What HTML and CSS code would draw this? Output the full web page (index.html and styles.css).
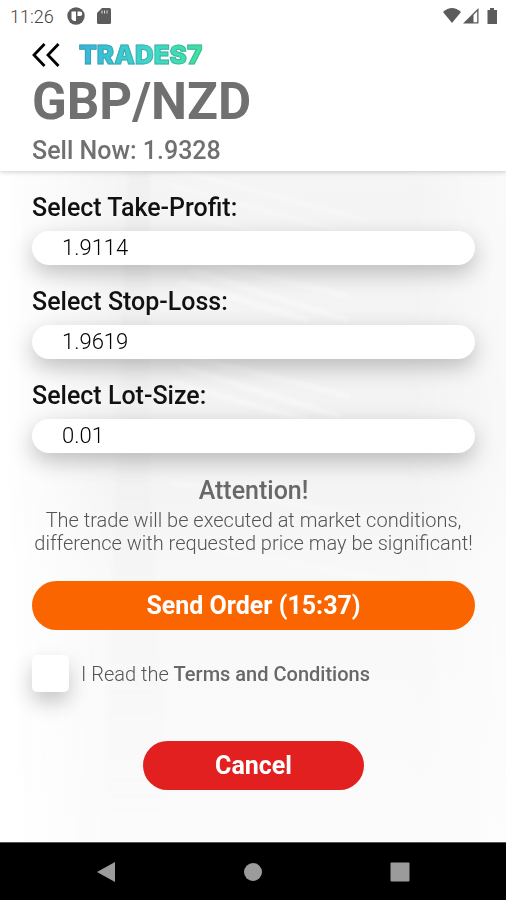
FILE: index.html
```html
<!DOCTYPE html>
<html lang="en">
<head>
<meta charset="utf-8">
<meta name="viewport" content="width=device-width, initial-scale=1">
<title>Sell GBP/NZD</title>
<link rel="stylesheet" href="styles.css">
</head>
<body>
<div class="status">
  <span>11:26</span>
  <svg class="status-app" width="18" height="18" viewBox="0 0 18 18" aria-hidden="true">
    <circle cx="9" cy="9" r="8.7" fill="#5c5c5c"/>
    <path d="M4.500 4.500h4.500v9.500H7a7 7 0 0 1-2.500-2zM10.500 4.500h2.500a2.200 2.200 0 0 1 0 4.500h-2.500z" fill="#fff"/>
  </svg>
  <svg width="14" height="16" viewBox="0 0 14 16" aria-hidden="true">
    <path d="M5 0h7.500Q14 0 14 1.500v13q0 1.500-1.500 1.500h-11Q0 16 0 14.500V5z" fill="#5c5c5c"/>
    <path d="M5 2.500v3M7.500 2.500v3M10 2.500v3" stroke="#ddd" stroke-width="1"/>
  </svg>
  <svg class="status-right" width="55" height="16" viewBox="0 0 55 16" aria-hidden="true">
    <path d="M0 4Q9-4 18 4L9 15z" fill="#5c5c5c"/>
    <path d="M20 15.500L35.500 0v15.500z" fill="#5c5c5c"/>
    <path d="M30.500 7L34.200 3.300v10.900h-3.700z" fill="#fff"/>
    <path d="M47 0h4v2h3v14H44.500V2H47z" fill="#5c5c5c"/>
  </svg>
</div>

<header class="header">
  <div class="brand">
    <button class="back" type="button" aria-label="Back">
      <svg width="28" height="26" viewBox="0 0 28 26" aria-hidden="true">
        <path d="M12.500 2L2 13l10.500 11M26.500 2L16 13l10.500 11" fill="none" stroke="#000" stroke-width="2.800"/>
      </svg>
    </button>
    <span class="logo">TRADES7</span>
  </div>
  <h1 class="pair">GBP/NZD</h1>
  <p class="price">Sell Now: 1.9328</p>
</header>

<main class="main">
  <svg class="backdrop" viewBox="0 0 506 670" preserveAspectRatio="none" aria-hidden="true">
    <defs>
      <linearGradient id="fade" x1="0" y1="0" x2="0" y2="1">
        <stop offset="0" stop-color="#f5f5f5"/>
        <stop offset=".4" stop-color="#f2f2f2"/>
        <stop offset=".6" stop-color="#f8f8f8"/>
        <stop offset="1" stop-color="#fbfbfb"/>
      </linearGradient>
      <linearGradient id="side" x1="0" y1="0" x2="1" y2="0">
        <stop offset="0" stop-color="#fff"/>
        <stop offset=".25" stop-color="#fff" stop-opacity="0"/>
        <stop offset=".8" stop-color="#fff" stop-opacity="0"/>
        <stop offset="1" stop-color="#fff" stop-opacity=".5"/>
      </linearGradient>
      <linearGradient id="column" x1="0" y1="0" x2="0" y2="1">
        <stop offset="0" stop-color="#e8e8e8"/>
        <stop offset="1" stop-color="#e8e8e8" stop-opacity="0"/>
      </linearGradient>
      <filter id="soft"><feGaussianBlur stdDeviation="2"/></filter>
    </defs>
    <rect width="506" height="670" fill="url(#fade)"/>
    <path d="M128 0L100 670H170L150 300V0z" fill="url(#column)" opacity=".35" filter="url(#soft)"/>
    <g stroke="#fff" opacity=".45" fill="none" filter="url(#soft)">
      <path d="M180 0L370 50M170 14L340 60M160 34L310 76" stroke-width="3"/>
      <path d="M200 90L350 125M190 98L350 150M180 110L310 150" stroke-width="5"/>
      <path d="M190 185L350 225M180 195L340 245M170 210L310 250" stroke-width="5"/>
      <path d="M170 310L390 350M170 370L400 410" stroke-width="6" opacity=".6"/>
    </g>
    <rect width="506" height="670" fill="url(#side)"/>
  </svg>

  <form class="form">
    <label class="label" for="tp">Select Take-Profit:</label>
    <input class="field" id="tp" type="text" value="1.9114">
    <label class="label" for="sl">Select Stop-Loss:</label>
    <input class="field" id="sl" type="text" value="1.9619">
    <label class="label" for="lot">Select Lot-Size:</label>
    <input class="field" id="lot" type="text" value="0.01">

    <h2 class="attention">Attention!</h2>
    <p class="note">The trade will be executed at market conditions,<br>difference with requested price may be significant!</p>

    <button class="btn send" type="button">Send Order (15:37)</button>
    <div class="terms">
      <input class="check" id="agree" type="checkbox">
      <label for="agree">I Read the <b>Terms and Conditions</b></label>
    </div>
    <button class="btn cancel" type="button">Cancel</button>
  </form>
</main>

<nav class="nav" aria-label="System">
  <button type="button" aria-label="Back"><svg width="20" height="22" viewBox="0 0 20 22"><path d="M1 11L19 1v20z" fill="#9b9b9b"/></svg></button>
  <button type="button" aria-label="Home"><svg width="20" height="22" viewBox="0 0 20 22"><circle cx="10" cy="11" r="9" fill="#9b9b9b"/></svg></button>
  <button type="button" aria-label="Recent apps"><svg width="20" height="22" viewBox="0 0 20 22"><rect x=".5" y="1.500" width="19" height="19" rx="1" fill="#9b9b9b"/></svg></button>
</nav>
</body>
</html>
```
FILE: styles.css
```css
* { box-sizing: border-box; }

body {
  margin: 0;
  min-height: 100vh;
  display: flex;
  flex-direction: column;
  background: #fff;
  color: #707070;
  font-family: Roboto, "Liberation Sans", sans-serif;
}

h1, h2, p { margin: 0; font-weight: 500; }
button { border: 0; padding: 0; background: none; font-family: inherit; }
svg { display: block; }

.status {
  position: relative;
  z-index: 2;
  display: flex;
  align-items: center;
  height: 32px;
  padding: 0 8px 0 10px;
  background: #fff;
  font-size: 18px;
  font-weight: 300;
  color: #444;
}
.status-app { margin: 0 12px 0 13px; }
.status-right { margin-left: auto; }

.header {
  position: relative;
  z-index: 1;
  height: 139px;
  padding: 8px 32px 0;
  background: #fff;
  box-shadow: 0 1px 5px rgba(0, 0, 0, .2);
}
.brand { display: flex; align-items: center; gap: 19px; height: 30px; }
.logo {
  font: 900 26px/30px Inter, sans-serif;
  color: transparent;
  background: linear-gradient(90deg, #39b4dc, #40d8c8 60%, #3de29c);
  -webkit-background-clip: text;
  background-clip: text;
  -webkit-text-stroke: 1px rgba(50, 130, 130, .45);
}
.pair { font-size: 51px; line-height: 64px; font-weight: 700; }
.price { font-size: 25px; line-height: 34px; }

.main { position: relative; flex: 1; }
.backdrop { position: absolute; inset: 0; width: 100%; height: 100%; }

.form {
  position: relative;
  display: flex;
  flex-direction: column;
  padding: 20px 31px 52px 32px;
}
.label { font-size: 25px; line-height: 34px; font-weight: 500; color: #111; }
.field {
  width: 100%;
  height: 34px;
  margin: 6px 0 20px;
  padding: 0 30px;
  border: 0;
  border-radius: 17px;
  background: #fff;
  color: #000;
  font: 300 22px/34px Roboto, sans-serif;
  box-shadow: 0 8px 22px rgba(0, 0, 0, .24);
}
.attention { font-size: 25px; line-height: 36px; text-align: center; color: #686868; }
.note { margin: 0 -8px; font-size: 20px; line-height: 23px; font-weight: 300; text-align: center; color: #555; }
.btn {
  height: 49px;
  border-radius: 25px;
  color: #fff;
  font-size: 25px;
  font-weight: 700;
}
.send { margin-top: 26px; background: #fb6500; }
.terms { display: flex; align-items: center; gap: 12px; margin: 25px 0 49px; font-size: 20px; font-weight: 300; color: #555; }
.terms b { font-weight: 500; color: #686868; }
.check {
  appearance: none;
  width: 37px;
  height: 37px;
  margin: 0;
  border-radius: 5px;
  background: #fff;
  box-shadow: 0 10px 20px rgba(0, 0, 0, .22);
}
.cancel { width: 50%; align-self: center; background: #e22020; }

.nav {
  display: flex;
  justify-content: space-between;
  align-items: center;
  height: 58px;
  padding: 0 96px;
  background: #000;
  border-top: 1px solid #555;
}
```
